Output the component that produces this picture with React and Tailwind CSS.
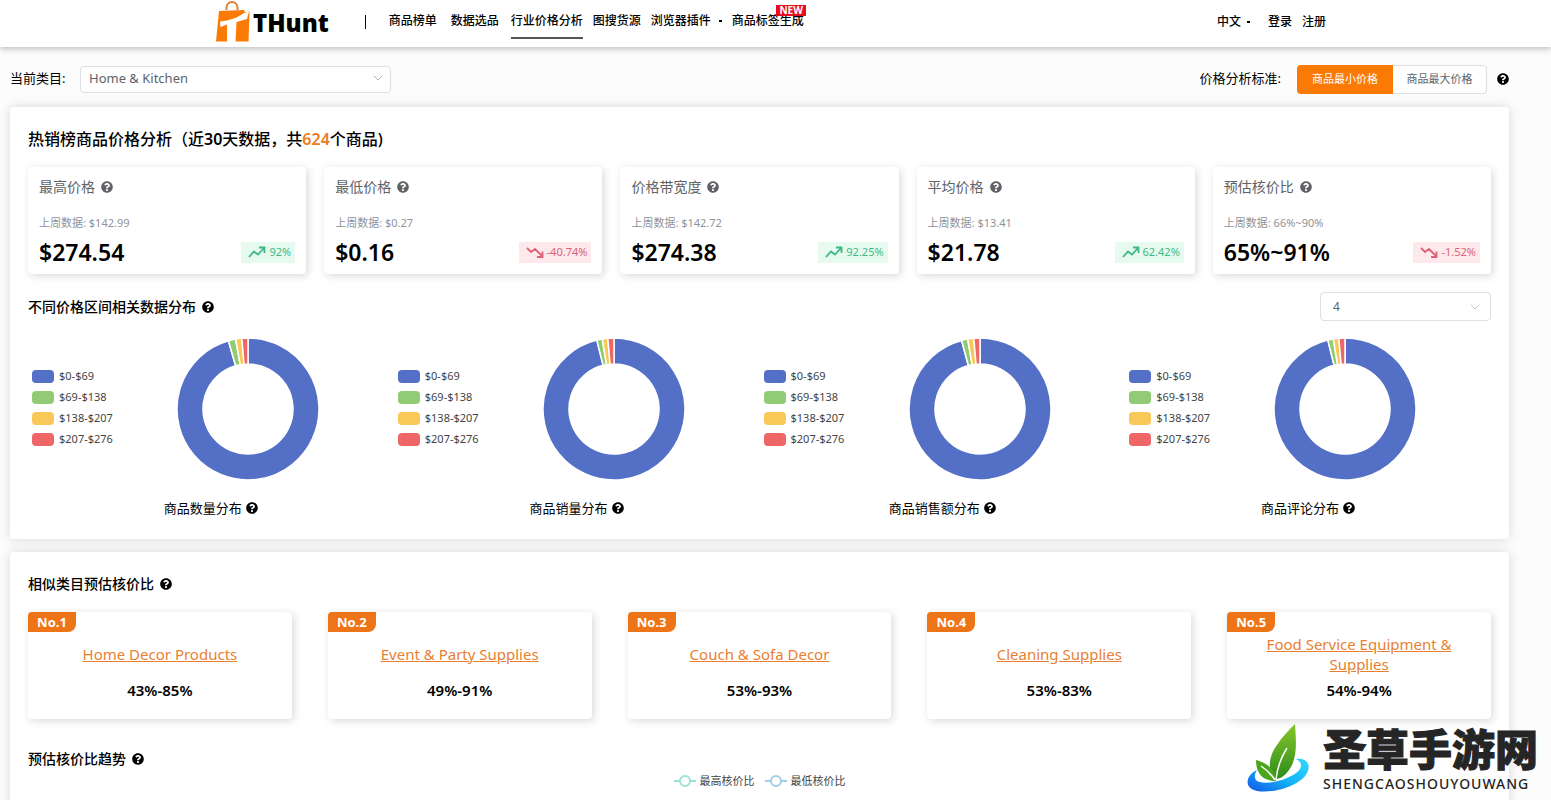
import { FaQuestionCircle } from "react-icons/fa";
import { ChevronDown } from "lucide-react";

const NAV = [
  { label: "商品榜单", cls: "mr-[14px]" },
  { label: "数据选品", cls: "mr-3" },
  { label: "行业价格分析", cls: "mr-[10px]", active: true },
  { label: "图搜货源", cls: "mr-[10px]" },
  { label: "浏览器插件", cls: "mr-[10px]", dot: true },
  { label: "商品标签生成", cls: "", isNew: true },
];

const STATS = [
  { title: "最高价格", last: "$142.99", value: "$274.54", rate: "92%", up: true },
  { title: "最低价格", last: "$0.27", value: "$0.16", rate: "-40.74%", up: false },
  { title: "价格带宽度", last: "$142.72", value: "$274.38", rate: "92.25%", up: true },
  { title: "平均价格", last: "$13.41", value: "$21.78", rate: "62.42%", up: true },
  { title: "预估核价比", last: "66%~90%", value: "65%~91%", rate: "-1.52%", up: false },
];

const LEGEND = [
  { label: "$0-$69", bg: "bg-[#5470c6]" },
  { label: "$69-$138", bg: "bg-[#91cc75]" },
  { label: "$138-$207", bg: "bg-[#fac858]" },
  { label: "$207-$276", bg: "bg-[#ee6666]" },
];

const COLORS = ["#5470c6", "#91cc75", "#fac858", "#ee6666"];

const CHARTS = [
  { title: "商品数量分布", parts: [344, 6, 5, 5] },
  { title: "商品销量分布", parts: [346, 4.5, 4.5, 5] },
  { title: "商品销售额分布", parts: [345, 5, 5, 5] },
  { title: "商品评论分布", parts: [346, 4.5, 4.5, 5] },
];

const SIMILAR = [
  { name: "Home Decor Products", ratio: "43%-85%" },
  { name: "Event & Party Supplies", ratio: "49%-91%" },
  { name: "Couch & Sofa Decor", ratio: "53%-93%" },
  { name: "Cleaning Supplies", ratio: "53%-83%" },
  { name: "Food Service Equipment & Supplies", ratio: "54%-94%" },
];

function Help({ className = "" }) {
  return <FaQuestionCircle className={`h-3 w-3 shrink-0 ${className}`} />;
}

function Logo() {
  return (
    <a href="#" className="flex items-start" aria-label="THunt">
      <svg width="36" height="43" viewBox="0 0 36 43">
        <path d="M11.500 10V7.500a5.500 5.500 0 0 1 11 0V10" fill="none" stroke="#e0813a" strokeWidth="2" />
        <path d="M4 11l25-1 1 2.500 4.500-1L33.500 41.500H1z" fill="#fb7a06" />
        <path d="M5 21.500c10-1 18-4 24-8.500l5-1.500-2 7.500-10.500 3-1 20h-8.500V24.500L5.500 27z" fill="#fff" />
      </svg>
      <span className="ml-[2px] mt-[7px] text-2xl leading-8 font-black">THunt</span>
    </a>
  );
}

function TrendIcon({ up }) {
  return (
    <svg width="18" height="12" viewBox="0 0 18 12" fill="none" stroke="currentColor" strokeWidth="1.8">
      {up ? (
        <path d="M1 11l5-5.500 4 3L16 2M11 1.500h5.500V7" />
      ) : (
        <path d="M1 2l4 4 4-3 7 7M16.500 5.500V11H11" />
      )}
    </svg>
  );
}

function point(r, deg) {
  const a = ((deg - 90) * Math.PI) / 180;
  return `${71 + r * Math.cos(a)} ${71 + r * Math.sin(a)}`;
}

function Donut({ parts }) {
  let from = 0;
  return (
    <svg width="142" height="142" viewBox="0 0 142 142">
      {parts.map((deg, i) => {
        const to = from + deg;
        const large = deg > 180 ? 1 : 0;
        const d = `M${point(71, from)}A71 71 0 ${large} 1 ${point(71, to)}L${point(45, to)}A45 45 0 ${large} 0 ${point(45, from)}Z`;
        from = to;
        return <path key={i} d={d} fill={COLORS[i]} stroke="#fff" strokeWidth="1.5" />;
      })}
    </svg>
  );
}

function StatCard({ title, last, value, rate, up }) {
  return (
    <div className="rounded bg-white px-[11px] pt-[10px] pb-1 shadow-[2px_2px_8px_rgba(0,0,0,0.15)]">
      <div className="flex items-center text-sm text-[#606266]">
        {title}
        <Help className="ml-[6px]" />
      </div>
      <div className="mt-4 text-[11px] leading-5 text-[#909399]">上周数据: {last}</div>
      <div className="mt-px flex items-center justify-between">
        <span className="text-[23px] leading-9 font-semibold">{value}</span>
        <span
          className={`flex h-[21px] items-center gap-[3px] pr-1 pl-[7px] text-[11px] ${
            up ? "bg-[#e7faf0] text-[#3fb983]" : "bg-[#fde8ec] text-[#db6478]"
          }`}
        >
          <TrendIcon up={up} />
          {rate}
        </span>
      </div>
    </div>
  );
}

function ChartColumn({ title, parts }) {
  return (
    <div>
      <div className="flex items-start pl-1">
        <ul className="w-[145px] shrink-0 pt-7">
          {LEGEND.map((l) => (
            <li key={l.label} className="flex h-[21px] items-center gap-[5px] text-[11px] text-[#444]">
              <span className={`h-[13px] w-[22px] rounded ${l.bg}`} />
              {l.label}
            </li>
          ))}
        </ul>
        <Donut parts={parts} />
      </div>
      <div className="mt-[18px] flex items-center justify-center gap-1 text-[13px] leading-5">
        {title}
        <Help />
      </div>
    </div>
  );
}

function SeriesMark({ color }) {
  return (
    <svg width="22" height="12" viewBox="0 0 22 12" fill="none" stroke={color} strokeWidth="2">
      <path d="M0 6h6M16 6h6" />
      <circle cx="11" cy="6" r="5" />
    </svg>
  );
}

function Watermark() {
  return (
    <div className="absolute right-[13px] bottom-2 flex items-end gap-[14px]">
      <svg width="62" height="68" viewBox="0 0 62 68">
        <defs>
          <linearGradient id="ring" x1="0" x2="1" y1="1" y2="0">
            <stop offset="0" stopColor="#1554e8" />
            <stop offset="0.5" stopColor="#12b5f5" />
            <stop offset="1" stopColor="#36d6ff" />
          </linearGradient>
          <linearGradient id="leaf" x1="0" x2="0" y1="0" y2="1">
            <stop offset="0" stopColor="#86c72b" />
            <stop offset="1" stopColor="#2d8a1a" />
          </linearGradient>
        </defs>
        <path
          d="M10 46C-1 51-4 64 10 67c18 3 44-6 50-18 5-10-2-15-11-14 8 4 6 11-3 16-13 8-33 10-37 5-2-3-1-7 1-10z"
          fill="url(#ring)"
        />
        <path d="M48 0c1 16 3 34-6 46-4 6-9 9-16 10-6-13-3-26 4-35 5-8 11-14 18-21z" fill="url(#leaf)" />
        <path d="M9 36c11 3 19 9 20 21-12 0-20-6-20-21z" fill="#4aa51d" />
        <path d="M14 42c6 4 10 8 14 14M29 56c1-12 4-21 11-32" fill="none" stroke="#fff" strokeWidth="1.500" />
      </svg>
      <div className="text-[#252525]">
        <div className="text-[43px] leading-[44px] font-black [-webkit-text-stroke:1px_#252525]">圣草手游网</div>
        <div className="mt-1 text-[14px] leading-4 font-medium tracking-[1px]">SHENGCAOSHOUYOUWANG</div>
      </div>
    </div>
  );
}

export default function App() {
  return (
    <div className="relative h-screen overflow-hidden bg-[#fcfcfc] font-['Noto_Sans','Noto_Sans_CJK_SC',sans-serif] text-black">
      <header className="relative flex h-[47px] items-center bg-white pr-[225px] pb-1 pl-[215px] shadow-[0_2px_6px_rgba(0,0,0,0.25)]">
        <Logo />
        <span className="ml-[36px] h-[14px] w-px bg-black" />
        <nav className="ml-[23px] flex flex-1 items-center text-[12px] font-medium">
          {NAV.map((n) => (
            <a
              key={n.label}
              href="#"
              className={`relative flex h-[34px] shrink-0 items-center border-b-2 ${n.cls} ${
                n.active ? "border-[#555]" : "border-transparent"
              }`}
            >
              {n.label}
              {n.dot && <span className="ml-2 h-[2px] w-[3px] bg-black" />}
              {n.isNew && (
                <span className="absolute top-0 right-0 -mr-[2px] bg-[#e60f1f] px-[3px] text-[10px] leading-[11px] font-bold text-white">
                  NEW
                </span>
              )}
            </a>
          ))}
        </nav>
        <div className="flex items-center text-[12px] font-medium">
          <button type="button" className="mr-[18px] flex items-center gap-[6px]">
            中文
            <span className="h-[2px] w-[3px] bg-black" />
          </button>
          <a href="#" className="mr-[10px]">登录</a>
          <a href="#">注册</a>
        </div>
      </header>

      <main className="pr-[42px] pl-[10px]">
        <div className="flex h-[60px] items-center justify-between pt-1">
          <div className="flex items-center">
            <label htmlFor="category" className="w-[70px] text-[13px]">当前类目:</label>
            <div className="relative">
              <select
                id="category"
                className="h-[27px] w-[311px] appearance-none rounded border border-[#dcdfe6] bg-white px-2 text-[13px] text-[#606266]"
              >
                <option>Home &amp; Kitchen</option>
              </select>
              <ChevronDown className="pointer-events-none absolute top-[5px] right-[5px] h-4 w-4 text-[#888]" strokeWidth={1} />
            </div>
          </div>
          <div className="flex items-center">
            <span className="text-[13px]">价格分析标准:</span>
            <div className="ml-4 flex h-[29px] text-[11px]">
              <button type="button" className="w-[96px] rounded-l bg-[#fb7a06] text-white">商品最小价格</button>
              <button type="button" className="w-[94px] rounded-r border border-l-0 border-[#dcdfe6] bg-white text-[#606266]">
                商品最大价格
              </button>
            </div>
            <Help className="ml-[10px]" />
          </div>
        </div>

        <section className="rounded bg-white px-[18px] pt-5 pb-[21px] shadow-[0_0_12px_rgba(0,0,0,0.15)]">
          <h2 className="text-base font-medium">
            热销榜商品价格分析（近<span className="font-semibold">30</span>天数据，共
            <span className="font-semibold text-[#ee7a20]">624</span>个商品)
          </h2>
          <div className="mt-4 grid grid-cols-5 gap-[18px]">
            {STATS.map((s) => (
              <StatCard key={s.title} {...s} />
            ))}
          </div>
          <div className="mt-[18px] flex items-center justify-between">
            <h3 className="flex items-center gap-[6px] text-sm font-medium">
              不同价格区间相关数据分布
              <Help />
            </h3>
            <div className="relative">
              <select
                aria-label="区间数量"
                className="h-[29px] w-[171px] appearance-none rounded border border-[#dcdfe6] bg-white px-3 text-[12px] text-[#606266]"
              >
                <option>4</option>
              </select>
              <ChevronDown className="pointer-events-none absolute top-[7px] right-2 h-4 w-4 text-[#aaa]" strokeWidth={1} />
            </div>
          </div>
          <div className="mt-[17px] grid grid-cols-4">
            {CHARTS.map((c) => (
              <ChartColumn key={c.title} {...c} />
            ))}
          </div>
        </section>

        <section className="mt-[13px] rounded bg-white px-[18px] pt-5 pb-10 shadow-[0_0_12px_rgba(0,0,0,0.15)]">
          <h3 className="flex items-center gap-[6px] text-sm leading-6 font-medium">
            相似类目预估核价比
            <Help />
          </h3>
          <div className="mt-4 grid grid-cols-5 gap-9">
            {SIMILAR.map((s, i) => (
              <div
                key={s.name}
                className="relative h-[107px] rounded bg-white px-9 pt-[22px] text-center shadow-[2px_2px_8px_rgba(0,0,0,0.15)]"
              >
                <span className="absolute top-0 left-0 h-5 w-12 rounded-tl rounded-br-lg bg-[#ee7517] text-[13px] leading-5 font-bold text-white">
                  No.{i + 1}
                </span>
                <div className="flex h-10 items-center justify-center">
                  <a href="#" className="text-[15px] leading-5 text-[#e87f32] underline">{s.name}</a>
                </div>
                <div className="mt-[6px] text-[15px] leading-5 font-semibold">{s.ratio}</div>
              </div>
            ))}
          </div>
          <h3 className="mt-7 flex items-center gap-[6px] text-sm leading-6 font-medium">
            预估核价比趋势
            <Help />
          </h3>
          <div className="mt-[2px] flex items-center justify-center gap-[10px] text-[11px] text-[#444]">
            <span className="flex items-center gap-1">
              <SeriesMark color="#9be3d3" />
              最高核价比
            </span>
            <span className="flex items-center gap-1">
              <SeriesMark color="#9fd0e3" />
              最低核价比
            </span>
          </div>
        </section>
      </main>
      <Watermark />
    </div>
  );
}
